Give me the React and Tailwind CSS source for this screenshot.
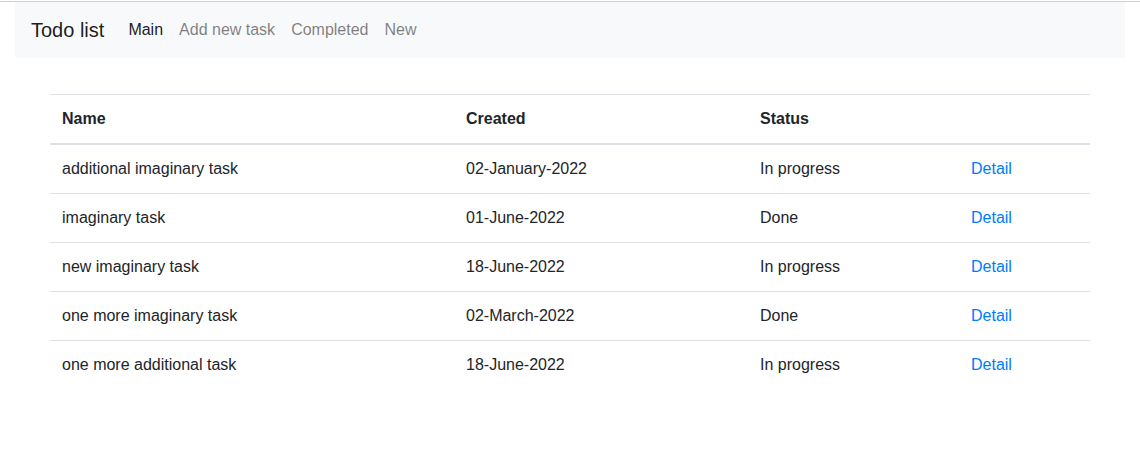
import React from 'react';

const tasks = [
  { name: 'additional imaginary task', created: '02-January-2022', status: 'In progress' },
  { name: 'imaginary task', created: '01-June-2022', status: 'Done' },
  { name: 'new imaginary task', created: '18-June-2022', status: 'In progress' },
  { name: 'one more imaginary task', created: '02-March-2022', status: 'Done' },
  { name: 'one more additional task', created: '18-June-2022', status: 'In progress' },
];

const App = () => {
  return (
    <div className="min-h-screen bg-white text-[16px] leading-6 text-[#212529] font-['Liberation_Sans',Arial,sans-serif]">
      <div className="h-px bg-white" />
      <div className="h-px bg-[#cfcfcf]" />

      <div className="px-[15px]">
        <nav className="flex h-[56px] items-center bg-[#f8f9fa] px-4">
          <a href="#" className="mr-4 text-[20px] leading-[30px] text-black/90">Todo list</a>
          <ul className="flex">
            <li><a href="#" className="block px-2 text-black/90">Main</a></li>
            <li><a href="#" className="block px-2 text-black/50">Add new task</a></li>
            <li><a href="#" className="block px-2 text-black/50">Completed</a></li>
            <li><a href="#" className="block px-2 text-black/50">New</a></li>
          </ul>
        </nav>
      </div>

      <div className="mt-[36px] px-[50px]">
        <table className="w-full table-fixed border-collapse">
          <thead>
            <tr className="border-t border-[#dee2e6]">
              <th className="w-[404px] border-b-2 border-[#dee2e6] p-3 text-left font-bold">Name</th>
              <th className="w-[294px] border-b-2 border-[#dee2e6] p-3 text-left font-bold">Created</th>
              <th className="w-[211px] border-b-2 border-[#dee2e6] p-3 text-left font-bold">Status</th>
              <th className="border-b-2 border-[#dee2e6] p-3" />
            </tr>
          </thead>
          <tbody>
            {tasks.map((t, i) => (
              <tr key={i} className={i > 0 ? 'border-t border-[#dee2e6]' : ''}>
                <td className="p-3">{t.name}</td>
                <td className="p-3">{t.created}</td>
                <td className="p-3">{t.status}</td>
                <td className="p-3">
                  <a href="#" className="text-[#007bff]">Detail</a>
                </td>
              </tr>
            ))}
          </tbody>
        </table>
      </div>
    </div>
  );
};

export default App;
